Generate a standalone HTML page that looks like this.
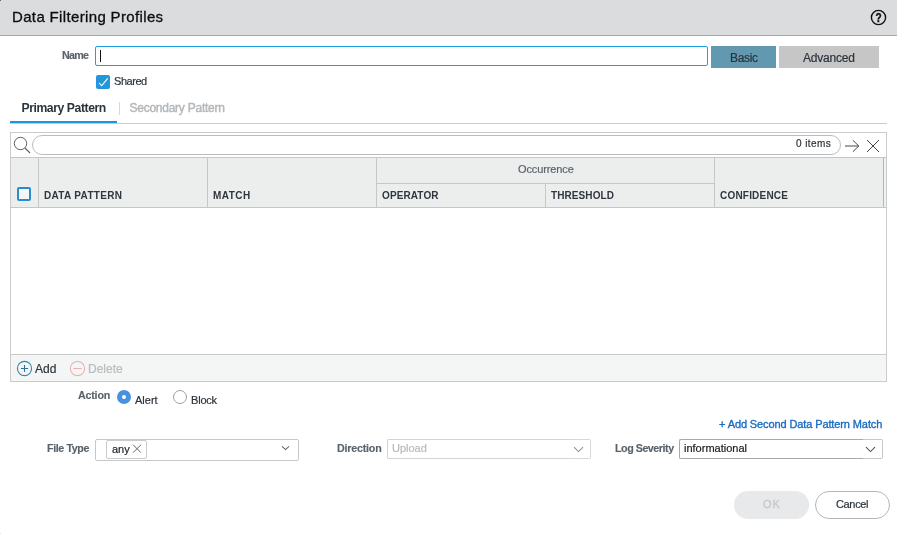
<!DOCTYPE html>
<html><head><meta charset="utf-8">
<style>
*{box-sizing:border-box;margin:0;padding:0}
html,body{width:897px;height:534px;overflow:hidden;background:#fff;font-family:"Liberation Sans",sans-serif;color:#333}
.a{position:absolute}
.t{position:absolute;white-space:nowrap;line-height:1;-webkit-text-stroke:0.2px currentColor}
.hdr{left:0;top:0;width:897px;height:35px;background:#dbdcdd;border-bottom:1px solid #a4a8ac;height:36px}
.lbl{font-weight:bold;color:#5a636b;-webkit-text-stroke:0.15px currentColor}
.line{position:absolute;background:#c5c7c9}
</style></head><body><div style="position:absolute;left:0;top:0;width:897px;height:534px;will-change:transform">
<!-- header -->
<div class="a hdr"></div>
<div class="a" style="left:0;top:0;width:1px;height:1px;background:#666"></div>
<div class="a" style="left:0;top:533px;width:1px;height:1px;background:#e2e2e2"></div>
<div class="t" style="left:12px;top:8.6px;font-size:15px;letter-spacing:0.35px;-webkit-text-stroke:0.3px currentColor;color:#0d0d0d">Data Filtering Profiles</div>
<svg class="a" style="left:870px;top:9px" width="17" height="17" viewBox="0 0 17 17">
  <circle cx="8.5" cy="8.5" r="7.1" fill="none" stroke="#111" stroke-width="1.4"/>
  <text transform="translate(8.6,0) scale(0.82,1)" x="0" y="12.9" text-anchor="middle" font-family="Liberation Sans" font-weight="bold" font-size="12.3" fill="#111" stroke="#111" stroke-width="0.4">?</text>
</svg>

<!-- name row -->
<div class="t lbl" style="left:62px;top:49.9px;font-size:10.7px;letter-spacing:-0.7px">Name</div>
<div class="a" style="left:95px;top:46px;width:613px;height:20px;border:1px solid #1e9fe3;border-radius:2px"></div>
<div class="a" style="left:100px;top:50px;width:1px;height:12px;background:#111"></div>
<div class="a" style="left:711px;top:46px;width:65px;height:22px;background:#6399b0"></div>
<div class="t" style="left:730px;top:51.8px;font-size:12px;letter-spacing:-0.35px;color:#2b3540">Basic</div>
<div class="a" style="left:779px;top:46px;width:100px;height:22px;background:#c6c6c6"></div>
<div class="t" style="left:803px;top:51.8px;font-size:12px;letter-spacing:-0.2px;color:#2b3540">Advanced</div>

<!-- shared -->
<div class="a" style="left:96px;top:75px;width:14px;height:14px;background:#2497dc;border-radius:2px"></div>
<svg class="a" style="left:96px;top:75px" width="14" height="14" viewBox="0 0 14 14"><path d="M3 8 L5.7 10.7 L11.7 3.4" fill="none" stroke="#fff" stroke-width="1.05"/></svg>
<div class="t" style="left:114px;top:76px;font-size:11px;letter-spacing:-0.45px;color:#2b3540">Shared</div>

<!-- tabs -->
<div class="t" style="left:21.5px;top:101.6px;font-size:12.2px;font-weight:bold;-webkit-text-stroke:0;letter-spacing:-0.43px;color:#2b333b">Primary Pattern</div>
<div class="a" style="left:119px;top:102px;width:1px;height:13px;background:#d6d8da"></div>
<div class="t" style="left:129.5px;top:101.6px;font-size:12px;letter-spacing:-0.25px;-webkit-text-stroke:0.45px currentColor;color:#b5b8bb">Secondary Pattern</div>
<div class="a" style="left:10px;top:123px;width:877px;height:1px;background:#c9cbcd"></div>
<div class="a" style="left:10px;top:121px;width:107px;height:2px;background:#1a97de"></div>

<!-- grid -->
<div class="a" style="left:10px;top:132px;width:877px;height:250px;border:1px solid #c9cbcd"></div>
<svg class="a" style="left:12px;top:135px" width="22" height="22" viewBox="0 0 22 22">
  <circle cx="8.5" cy="8.5" r="6.2" fill="none" stroke="#5c6065" stroke-width="1"/>
  <path d="M13 13 L18 18" stroke="#5c6065" stroke-width="1.1"/>
</svg>
<div class="a" style="left:32px;top:135px;width:809px;height:20px;border:1px solid #b9bcbf;border-radius:10px"></div>
<div class="t" style="left:796px;top:138.5px;font-size:10px;letter-spacing:0.4px;color:#2b333b">0 items</div>
<svg class="a" style="left:843px;top:138px" width="40" height="17" viewBox="0 0 40 17">
  <path d="M2 8 L15.8 8 M9.9 2.3 L15.8 8 L9.9 13.7" fill="none" stroke="#3a3d40" stroke-width="0.95"/>
  <path d="M24 2 L36 14 M36 2 L24 14" fill="none" stroke="#3a3d40" stroke-width="0.95"/>
</svg>

<!-- grid header -->
<div class="a" style="left:11px;top:157px;width:875px;height:51px;background:#eceeee;border-top:1px solid #c4c6c8;border-bottom:1px solid #c4c6c8"></div>
<div class="a" style="left:884px;top:158px;width:2px;height:49px;background:#f0f1f1"></div>
<div class="line" style="left:38px;top:158px;width:1px;height:49px"></div>
<div class="line" style="left:207px;top:158px;width:1px;height:49px"></div>
<div class="line" style="left:376px;top:158px;width:1px;height:49px"></div>
<div class="line" style="left:545px;top:183px;width:1px;height:24px"></div>
<div class="line" style="left:714px;top:158px;width:1px;height:49px"></div>
<div class="line" style="left:883px;top:158px;width:1px;height:49px;background:#b5b7b9"></div>
<div class="line" style="left:376px;top:183px;width:338px;height:1px"></div>
<div class="a" style="left:17px;top:187px;width:14px;height:14px;border:2px solid #2a8ccc;border-radius:2px;background:#f4f6f7"></div>
<div class="t" style="left:518px;top:163.7px;font-size:11px;letter-spacing:-0.12px;color:#5b646c">Occurrence</div>
<div class="t" style="left:44px;top:190.6px;font-size:10px;font-weight:bold;-webkit-text-stroke:0;letter-spacing:0.33px;color:#2f363c">DATA PATTERN</div>
<div class="t" style="left:213px;top:190.6px;font-size:10px;font-weight:bold;-webkit-text-stroke:0;letter-spacing:0.47px;color:#2f363c">MATCH</div>
<div class="t" style="left:382px;top:190.6px;font-size:10px;font-weight:bold;-webkit-text-stroke:0;letter-spacing:0.11px;color:#2f363c">OPERATOR</div>
<div class="t" style="left:551px;top:190.6px;font-size:10px;font-weight:bold;-webkit-text-stroke:0;letter-spacing:0.09px;color:#2f363c">THRESHOLD</div>
<div class="t" style="left:720px;top:190.6px;font-size:10px;font-weight:bold;-webkit-text-stroke:0;letter-spacing:0.2px;color:#2f363c">CONFIDENCE</div>

<!-- toolbar -->
<div class="a" style="left:11px;top:354px;width:875px;height:27px;background:#f4f5f5;border-top:1px solid #c9cbcd"></div>
<svg class="a" style="left:16px;top:360px" width="17" height="17" viewBox="0 0 17 17">
  <circle cx="8.5" cy="8.5" r="7.1" fill="none" stroke="#3a84aa" stroke-width="1.1"/>
  <path d="M8.5 4.9 V12.1 M4.9 8.5 H12.1" stroke="#2f7298" stroke-width="1.1"/>
</svg>
<div class="t" style="left:35px;top:362.5px;font-size:12px;color:#2b333b">Add</div>
<svg class="a" style="left:69px;top:360px" width="17" height="17" viewBox="0 0 17 17">
  <circle cx="8.5" cy="8.5" r="7.1" fill="none" stroke="#e8b0b0" stroke-width="1.05"/>
  <path d="M4.4 8.5 H12.6" stroke="#e8b0b0" stroke-width="1.05"/>
</svg>
<div class="t" style="left:88px;top:362.5px;font-size:12px;color:#b9bcbf">Delete</div>

<!-- action -->
<div class="t lbl" style="left:78px;top:389.7px;font-size:10.7px;letter-spacing:-0.2px">Action</div>
<div class="a" style="left:117px;top:390px;width:14px;height:14px;border-radius:50%;background:#4a90e2"></div>
<div class="a" style="left:122px;top:395px;width:4px;height:4px;border-radius:50%;background:#fff"></div>
<div class="t" style="left:135px;top:395px;font-size:11px;color:#2b333b">Alert</div>
<div class="a" style="left:173px;top:390px;width:14px;height:14px;border-radius:50%;border:1px solid #9a9ea2;background:#fff"></div>
<div class="t" style="left:191px;top:395px;font-size:11px;letter-spacing:-0.2px;color:#2b333b">Block</div>

<!-- add second -->
<div class="t" style="left:719px;top:418.6px;font-size:11px;letter-spacing:-0.11px;-webkit-text-stroke:0.35px currentColor;color:#1a6cc2">+ Add Second Data Pattern Match</div>

<!-- file type -->
<div class="t lbl" style="left:47px;top:442.6px;font-size:10.7px;letter-spacing:-0.4px">File Type</div>
<div class="a" style="left:95px;top:439px;width:204px;height:22px;border:1px solid #c5c8cb;border-radius:2px"></div>
<div class="a" style="left:106px;top:440px;width:41px;height:19px;border:1px solid #c9cbcd;border-radius:2px"></div>
<div class="t" style="left:112px;top:443.5px;font-size:11px;color:#1f2327">any</div>
<svg class="a" style="left:131px;top:443px" width="12" height="12" viewBox="0 0 12 12"><path d="M2 1.7 L10 9.7 M10 1.7 L2 9.7" stroke="#666" stroke-width="1"/></svg>
<svg class="a" style="left:280px;top:443px" width="12" height="9" viewBox="0 0 12 9"><path d="M2 3.4 L5.5 6.6 L9 3.4" fill="none" stroke="#60666c" stroke-width="1.1"/></svg>

<!-- direction -->
<div class="t lbl" style="left:337px;top:442.6px;font-size:10.7px;letter-spacing:-0.2px">Direction</div>
<div class="a" style="left:387px;top:439px;width:184px;height:20px;border:1px solid #d2d4d6;border-right:none;border-radius:2px 0 0 2px"></div>
<div class="a" style="left:571px;top:439px;width:20px;height:20px;border:1px solid #d6d8da;border-left:none;border-radius:0 2px 2px 0"></div>
<div class="t" style="left:392px;top:443px;font-size:11px;color:#b6b9bc">Upload</div>
<svg class="a" style="left:572px;top:444px" width="12" height="10" viewBox="0 0 12 10"><path d="M2 3.2 L6.5 7.6 L11 3.2" fill="none" stroke="#8d9196" stroke-width="1.05"/></svg>

<!-- log severity -->
<div class="t lbl" style="left:615px;top:442.6px;font-size:10.7px;letter-spacing:-0.46px">Log Severity</div>
<div class="a" style="left:679px;top:439px;width:184px;height:20px;border:1px solid #a7aaad;border-right:none;border-radius:2px 0 0 2px"></div>
<div class="a" style="left:863px;top:439px;width:20px;height:20px;border:1px solid #c6c9cc;border-left:none;border-radius:0 2px 2px 0"></div>
<div class="t" style="left:684px;top:442.6px;font-size:11px;color:#1b1b1b">informational</div>
<svg class="a" style="left:864px;top:444px" width="12" height="10" viewBox="0 0 12 10"><path d="M2 3.2 L6.5 7.6 L11 3.2" fill="none" stroke="#50565b" stroke-width="1.1"/></svg>

<!-- buttons -->
<div class="a" style="left:734px;top:491px;width:75px;height:28px;border-radius:14px;background:#e8e9ea"></div>
<div class="t" style="left:763px;top:499px;font-size:11px;letter-spacing:1px;-webkit-text-stroke:0.35px currentColor;color:#c6c8ca">OK</div>
<div class="a" style="left:815px;top:491px;width:75px;height:28px;border-radius:14px;border:1px solid #b3b6b9;background:#fff"></div>
<div class="t" style="left:836px;top:499px;font-size:11px;letter-spacing:-0.35px;color:#2b333b">Cancel</div>
</div></body></html>
